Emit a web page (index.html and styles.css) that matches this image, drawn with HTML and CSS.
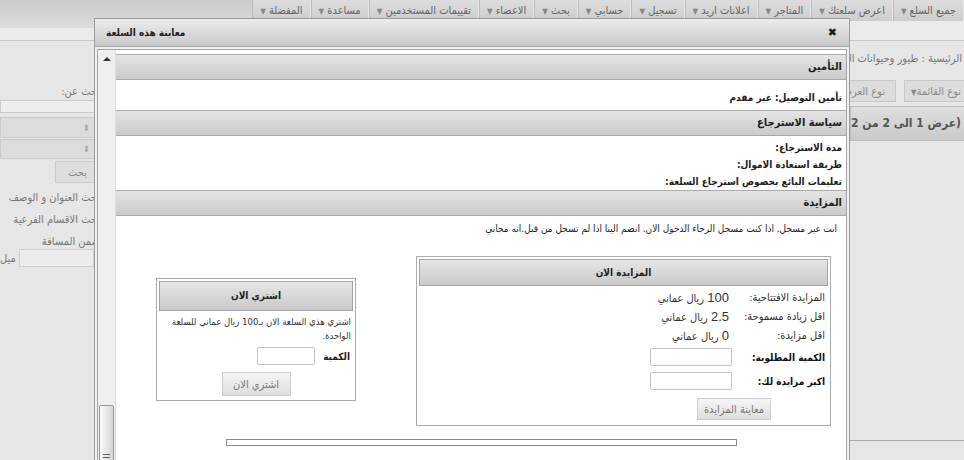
FILE: index.html
```html
<!DOCTYPE html>
<html lang="ar" dir="rtl">
<head>
    <meta charset="UTF-8">
    <meta name="viewport" content="width=device-width, initial-scale=1.0">
    <title>معاينة هذه السلعة</title>
    <link rel="stylesheet" href="styles.css">
</head>
<body>
    <div class="topbar">
        <ul class="nav">
            <li>جميع السلع <span class="caret">▼</span></li>
            <li>اعرض سلعتك <span class="caret">▼</span></li>
            <li>المتاجر <span class="caret">▼</span></li>
            <li>اعلانات اريد <span class="caret">▼</span></li>
            <li>تسجيل <span class="caret">▼</span></li>
            <li>حسابي <span class="caret">▼</span></li>
            <li>بحث <span class="caret">▼</span></li>
            <li>الاعضاء <span class="caret">▼</span></li>
            <li>تقييمات المستخدمين <span class="caret">▼</span></li>
            <li>مساعدة <span class="caret">▼</span></li>
            <li>المفضلة <span class="caret">▼</span></li>
        </ul>
        <div class="brand-fill"></div>
    </div>

    <div class="main">
        <section class="listing">
            <div class="crumbs">الرئيسية : طيور وحيوانات الزينة &gt; طيور</div>
            <div class="list-tools">
                <button class="tool-btn">نوع القائمة<span class="caret">▼</span></button>
                <button class="tool-btn">نوع العرض<span class="caret">▼</span></button>
            </div>
            <div class="results-bar">(عرض 1 الى 2 من 2 عنصر)</div>
            <div class="results-panel"></div>
        </section>

        <aside class="side">
            <div class="side-label">بحث عن:</div>
            <div class="side-input"></div>
            <div class="side-select"><span class="sel-arrow">⬍</span></div>
            <div class="side-select"><span class="sel-arrow">⬍</span></div>
            <button class="side-btn">بحث</button>
            <div class="side-opt">بحث العنوان و الوصف</div>
            <div class="side-opt">بحث الاقسام الفرعية</div>
            <div class="side-opt">ضمن المسافة</div>
            <div class="distance">
                <span class="side-field"></span>
                <span>ميل</span>
            </div>
        </aside>
    </div>

    <!-- نافذة معاينة السلعة -->
    <div class="dialog">
        <div class="dialog-title">
            <span class="dialog-close">✖</span>
            <span class="dialog-name">معاينة هذه السلعة</span>
        </div>
        <div class="dialog-body">
            <div class="dialog-scroll">
                <h3 class="sec-head">التأمين</h3>
                <div class="sec-body sec-insurance">تأمين التوصيل: غير مقدم</div>

                <h3 class="sec-head">سياسة الاسترجاع</h3>
                <div class="sec-body sec-return">
                    <p>مدة الاسترجاع:</p>
                    <p>طريقة استعادة الاموال:</p>
                    <p>تعليمات البائع بخصوص استرجاع السلعة:</p>
                </div>

                <h3 class="sec-head">المزايدة</h3>
                <div class="sec-body sec-auction">
                    <p class="guest-note">انت غير مسجل. اذا كنت مسجل الرجاء الدخول الان. انضم الينا اذا لم تسجل من قبل.انه مجاني</p>

                    <div class="deal-row">
                        <div class="bid-box">
                            <div class="box-head">المزايدة الان</div>
                            <div class="bid-grid">
                                <span class="bid-label">المزايدة الافتتاحية:</span>
                                <span class="bid-value"><span class="num">100</span> ريال عماني</span>
                                <span class="bid-label">اقل زيادة مسموحة:</span>
                                <span class="bid-value"><span class="num">2.5</span> ريال عماني</span>
                                <span class="bid-label">اقل مزايدة:</span>
                                <span class="bid-value"><span class="num">0</span> ريال عماني</span>
                                <b class="bid-label strong">الكمية المطلوبة:</b>
                                <input class="field" type="text">
                                <b class="bid-label strong">اكبر مزايدة لك:</b>
                                <input class="field" type="text">
                            </div>
                            <div class="bid-actions">
                                <button class="grey-btn bid-btn">معاينة المزايدة</button>
                            </div>
                        </div>

                        <div class="buy-box">
                            <div class="box-head">اشتري الان</div>
                            <p class="buy-text">اشتري هذي السلعة الان بـ100 ريال عماني للسلعة الواحدة.</p>
                            <div class="buy-qty">
                                <b>الكمية</b>
                                <input class="field qty-field" type="text">
                            </div>
                            <div class="buy-actions">
                                <button class="grey-btn buy-btn">اشتري الان</button>
                            </div>
                        </div>
                    </div>

                    <div class="desc-frame"></div>
                </div>
            </div>
            <div class="fake-scroll">
                <span class="scroll-up"></span>
                <span class="scroll-thumb"><i></i><i></i><i></i></span>
            </div>
        </div>
    </div>
</body>
</html>
```

FILE: styles.css
```css
* {
    margin: 0;
    padding: 0;
    box-sizing: border-box;
}

body {
    width: 964px;
    height: 460px;
    overflow: hidden;
    position: relative;
    direction: rtl;
    background: #e6e6e6;
    font-family: Tahoma, "DejaVu Sans Condensed", "DejaVu Sans", sans-serif;
    font-size: 11px;
    color: #222;
}

button,
input {
    font-family: inherit;
    font-size: 11px;
}

.caret {
    font-size: 8px;
    color: #888;
}

/* الشريط العلوي */
.topbar {
    display: flex;
    align-items: flex-start;
    height: 41px;
    background: #ebebeb;
    border-bottom: 1px solid #c9c9c9;
}

.nav {
    display: flex;
    list-style: none;
    height: 21px;
    background: linear-gradient(#dddddd, #cdcdcd);
}

.nav li {
    padding: 0 7px;
    line-height: 21px;
    color: #666;
    white-space: nowrap;
    border-left: 1px solid #bcbcbc;
    border-right: 1px solid #e6e6e6;
}

.brand-fill {
    flex: 1;
    height: 28px;
    background: linear-gradient(#cbcbcb, #dcdcdc);
    border-bottom: 1px solid #d8d8d8;
}

/* محتوى الصفحة خلف النافذة */
.main {
    display: flex;
    justify-content: space-between;
    color: #777;
}

.listing {
    width: 114px;
    overflow: hidden;
}

.crumbs {
    margin-top: 11px;
    line-height: 14px;
    padding-right: 2px;
    white-space: nowrap;
}

.list-tools {
    display: flex;
    gap: 8px;
    margin-top: 14px;
    margin-right: -8px;
}

.tool-btn {
    flex-shrink: 0;
    height: 22px;
    padding: 0 10px 0 6px;
    background: #dcdcdc;
    border: 1px solid #c8c8c8;
    color: #8a8a8a;
    white-space: nowrap;
}

.results-bar {
    height: 35px;
    margin-top: 4px;
    margin-right: -6px;
    padding-right: 8px;
    line-height: 33px;
    font-size: 12px;
    font-weight: bold;
    color: #555;
    white-space: nowrap;
    background: linear-gradient(#dedede, #cacaca);
    border: 1px solid #bdbdbd;
}

.results-panel {
    height: 300px;
    border-bottom: 1px solid #ababab;
}

.side {
    width: 100px;
    flex-shrink: 0;
    padding-top: 44px;
    white-space: nowrap;
}

.side-label {
    line-height: 14px;
}

.side-input {
    height: 13px;
    margin-top: 1px;
    background: #eeeeee;
    border: 1px solid #cacaca;
}

.side-select {
    display: flex;
    align-items: center;
    height: 21px;
    margin-top: 4px;
    padding-right: 9px;
    background: #dcdcdc;
    border: 1px solid #cbcbcb;
}

.side-select + .side-select {
    height: 20px;
    margin-top: 1px;
}

.sel-arrow {
    font-size: 9px;
    color: #a8a8a8;
}

.side-btn {
    display: block;
    width: 45px;
    height: 22px;
    margin-top: 2px;
    background: #dedede;
    border: 1px solid #cbcbcb;
    color: #888;
}

.side-opt {
    margin-top: 8px;
    line-height: 14px;
}

.distance {
    display: flex;
    align-items: center;
    gap: 3px;
    padding-right: 6px;
}

.side-field {
    width: 80px;
    height: 18px;
    background: #ececec;
    border: 1px solid #cfcfcf;
}

/* نافذة المعاينة */
.dialog {
    position: absolute;
    top: 18px;
    left: 94px;
    width: 756px;
    height: 470px;
    display: flex;
    flex-direction: column;
    background: #f0f0f0;
    border: 1px solid #9c9c9c;
}

.dialog-title {
    display: flex;
    justify-content: space-between;
    align-items: center;
    height: 28px;
    padding: 0 12px 0 11px;
    background: linear-gradient(#ececec, #c9c9c9);
    border-bottom: 1px solid #a6a6a6;
}

.dialog-name {
    font-size: 10px;
    font-weight: bold;
    color: #222;
}

.dialog-close {
    font-family: "DejaVu Sans", sans-serif;
    font-size: 11px;
    color: #1a1a1a;
}

.dialog-body {
    flex: 1;
    display: flex;
    margin: 2px 2px 0;
    background: #fff;
    border: 1px solid #a4a4a4;
}

.dialog-scroll {
    flex: 1;
    padding-top: 4px;
}

.fake-scroll {
    width: 18px;
    display: flex;
    flex-direction: column;
    align-items: center;
    background: #efefef;
    border-right: 1px solid #dcdcdc;
}

.scroll-up {
    width: 0;
    height: 0;
    margin-top: 7px;
    border-left: 4px solid transparent;
    border-right: 4px solid transparent;
    border-bottom: 4px solid #333;
}

.scroll-thumb {
    width: 15px;
    flex: 1;
    margin-top: 344px;
    padding-top: 48px;
    display: flex;
    flex-direction: column;
    align-items: center;
    gap: 2px;
    background: linear-gradient(to right, #fafafa, #d4d4d4);
    border: 1px solid #9a9a9a;
    border-radius: 2px 2px 0 0;
}

.scroll-thumb i {
    width: 7px;
    height: 1px;
    background: #666;
}

.sec-head {
    height: 26px;
    padding-right: 4px;
    line-height: 24px;
    font-size: 11px;
    font-weight: bold;
    color: #222;
    background: linear-gradient(#e4e4e4, #cbcbcb);
    border-top: 1px solid #a9a9a9;
    border-bottom: 1px solid #a9a9a9;
}

.sec-body {
    padding-right: 4px;
    font-size: 10px;
    font-weight: bold;
}

.sec-insurance {
    height: 30px;
    padding-top: 11px;
    line-height: 14px;
}

.sec-return {
    height: 54px;
    padding-top: 3px;
    line-height: 17px;
}

.sec-auction {
    font-weight: normal;
    padding-right: 0;
}

.guest-note {
    padding: 6px 9px 0 0;
    line-height: 14px;
}

.deal-row {
    display: flex;
    align-items: flex-start;
    margin-top: 20px;
}

.bid-box {
    width: 415px;
    margin-right: 15px;
    padding: 2px 2px 0;
    font-size: 11px;
    border: 1px solid #ababab;
}

.box-head {
    height: 27px;
    line-height: 25px;
    text-align: center;
    font-size: 10px;
    font-weight: bold;
    color: #222;
    background: linear-gradient(#e6e6e6, #c9c9c9);
    border: 1px solid #a6a6a6;
}

.bid-grid {
    display: grid;
    grid-template-columns: 96px auto;
    grid-template-rows: 19px 19px 19px 24px 24px;
    padding-top: 2px;
    align-items: center;
}

.bid-label {
    padding-right: 3px;
    white-space: nowrap;
    color: #333;
}

.bid-label.strong {
    font-size: 10px;
    color: #111;
}

.bid-value {
    padding-right: 3px;
    color: #333;
}

.num {
    font-family: "Liberation Sans", Arial, sans-serif;
    font-size: 13px;
}

.bid-grid .field {
    justify-self: start;
}

.field {
    width: 82px;
    height: 18px;
    background: #fff;
    border: 1px solid #c4c4c4;
    border-radius: 2px;
}

.bid-actions {
    padding: 5px 57px 5px 0;
}

.grey-btn {
    height: 22px;
    color: #777;
    background: linear-gradient(#f6f6f6, #dedede);
    border: 1px solid #cdcdcd;
}

.bid-btn {
    width: 74px;
}

.buy-box {
    width: 200px;
    margin-top: 22px;
    margin-right: 60px;
    padding: 2px 2px 4px;
    border: 1px solid #ababab;
}

.buy-box .box-head {
    height: 30px;
    line-height: 28px;
}

.buy-text {
    padding: 4px 2px 0 1px;
    line-height: 14px;
    font-size: 9.5px;
    color: #333;
}

.buy-qty {
    display: flex;
    align-items: center;
    gap: 8px;
    margin-top: 4px;
    padding-right: 3px;
    font-size: 10px;
}

.qty-field {
    width: 58px;
}

.buy-actions {
    display: flex;
    justify-content: center;
    margin-top: 7px;
}

.buy-btn {
    width: 69px;
    height: 24px;
}

.desc-frame {
    width: 511px;
    height: 7px;
    margin: 13px auto 0;
    background: #fff;
    border: 1px solid #8c8c8c;
}
```
